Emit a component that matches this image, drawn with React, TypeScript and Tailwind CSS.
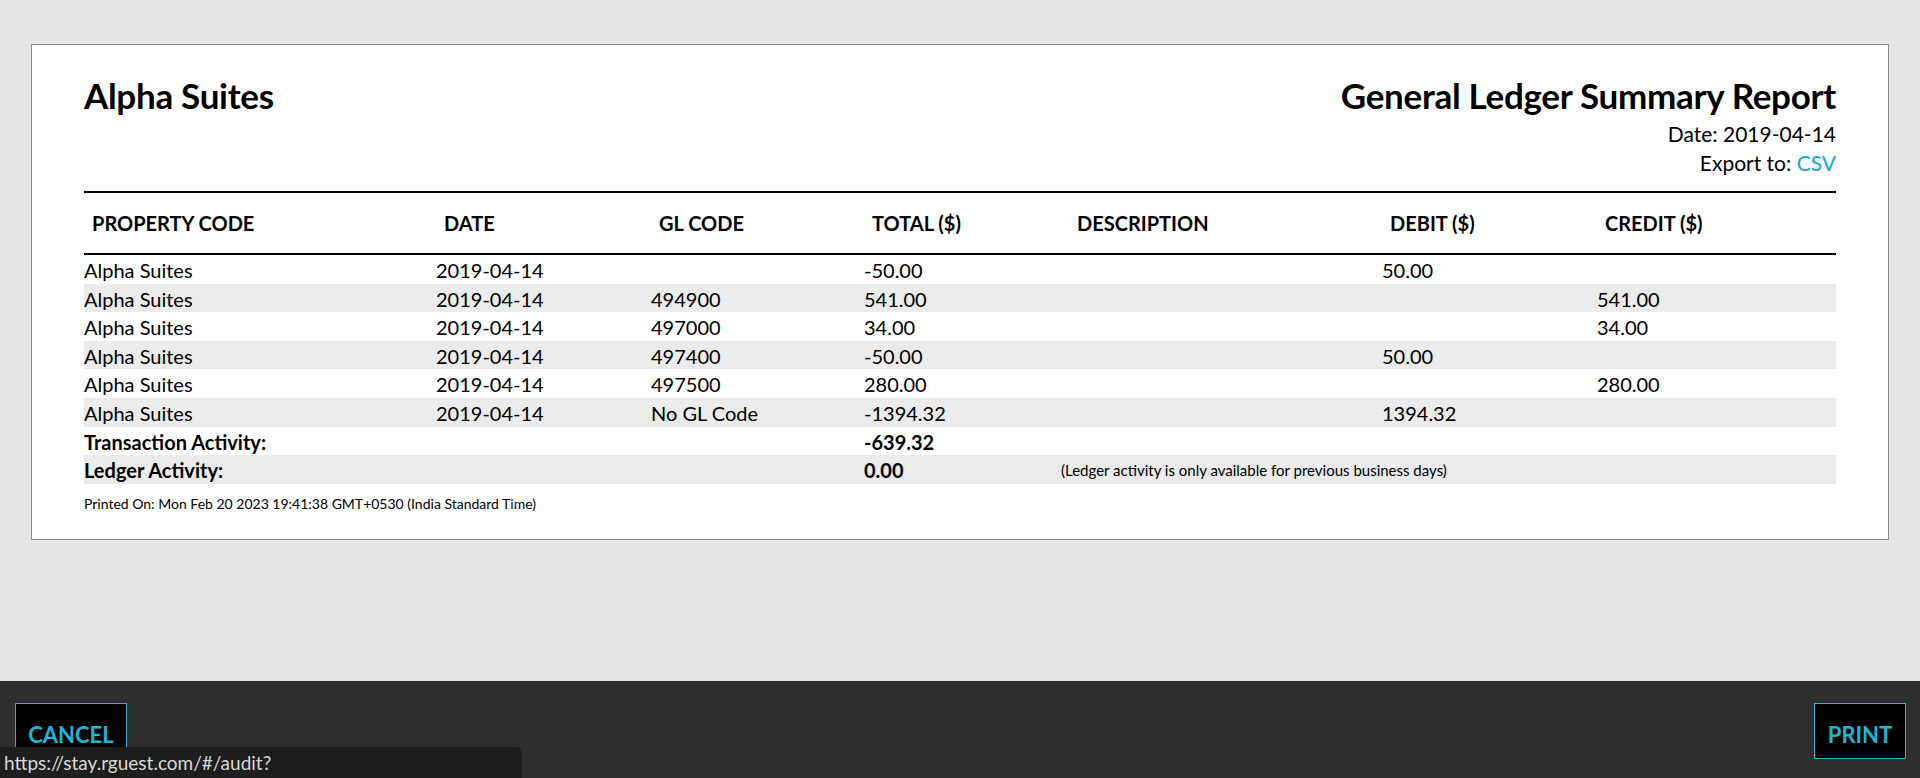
import React from "react";

const cols = "grid grid-cols-[352px_215px_213px_205px_313px_215px_1fr]";
const rows = [
  ["2019-04-14", "", "-50.00", "", "50.00", ""],
  ["2019-04-14", "494900", "541.00", "", "", "541.00"],
  ["2019-04-14", "497000", "34.00", "", "", "34.00"],
  ["2019-04-14", "497400", "-50.00", "", "50.00", ""],
  ["2019-04-14", "497500", "280.00", "", "", "280.00"],
  ["2019-04-14", "No GL Code", "-1394.32", "", "1394.32", ""],
];

export default function App() {
  return (
    <div className="w-[1920px] h-[778px] bg-[#e5e5e5] flex flex-col relative overflow-hidden text-black" style={{ fontFamily: "Lato, 'Open Sans', sans-serif" }}>
      <div className="h-[681px] pt-[44px] px-[31px]">
        <div className="bg-white border border-[#8a8a8a] h-[496px] px-[52px] pt-[28px]">
          <div className="flex justify-between items-start">
            <div className="text-[35px] font-bold leading-[44px] tracking-[-0.3px]">Alpha Suites</div>
            <div className="text-right">
              <div className="text-[35px] font-bold leading-[44px] tracking-[-0.3px]">General Ledger Summary Report</div>
              <div className="text-[21px] leading-[29px] mt-[2px]">Date: 2019-04-14</div>
              <div className="text-[21px] leading-[29px]">Export to: <span className="text-[#1aa5c9]">CSV</span></div>
            </div>
          </div>
          <div className="mt-[14px] border-t-2 border-black" />
          <div className={`${cols} h-[62px] items-center text-[20px] font-bold border-b-2 border-black`}>
            {["PROPERTY CODE", "DATE", "GL CODE", "TOTAL ($)", "DESCRIPTION", "DEBIT ($)", "CREDIT ($)"].map((h) => (
              <div key={h} className="pl-[8px]">{h}</div>
            ))}
          </div>
          {rows.map((r, i) => (
            <div key={i} className={`${cols} h-[28.6px] items-center text-[20px] ${i % 2 === 1 ? "bg-[#ebebeb]" : ""}`}>
              <div>Alpha Suites</div>
              {r.map((c, j) => (
                <div key={j}>{c}</div>
              ))}
            </div>
          ))}
          <div className={`${cols} h-[28.6px] items-center text-[20px] font-bold`}>
            <div className="col-span-3">Transaction Activity:</div>
            <div>-639.32</div>
          </div>
          <div className={`${cols} h-[28.6px] items-center bg-[#ebebeb]`}>
            <div className="col-span-3 text-[20px] font-bold">Ledger Activity:</div>
            <div className="text-[20px] font-bold">0.00</div>
            <div className="col-span-3 text-[15px] -ml-[8px]">(Ledger activity is only available for previous business days)</div>
          </div>
          <div className="text-[14px] mt-[9px]">Printed On: Mon Feb 20 2023 19:41:38 GMT+0530 (India Standard Time)</div>
        </div>
      </div>
      <div className="flex-1 bg-[#2e2e2e] flex justify-between items-start px-[15px] pt-[22px]">
        <button className="w-[112px] h-[56px] bg-black border border-[#1fb6d6] text-[#1fb6d6] text-[22px] font-bold pt-[6px]">CANCEL</button>
        <button className="w-[92px] h-[56px] bg-black border border-[#1fb6d6] text-[#1fb6d6] text-[22px] font-bold pt-[6px] -mr-[1px]">PRINT</button>
      </div>
      <div className="absolute left-0 bottom-0 w-[522px] h-[31px] bg-[#1e1e1e] rounded-tr-[5px] text-[#d8d8d8] text-[19px] leading-[31px] pl-[4px]">
        https://stay.rguest.com/#/audit?tenantId=494&amp;propertyId=307
      </div>
    </div>
  );
}
